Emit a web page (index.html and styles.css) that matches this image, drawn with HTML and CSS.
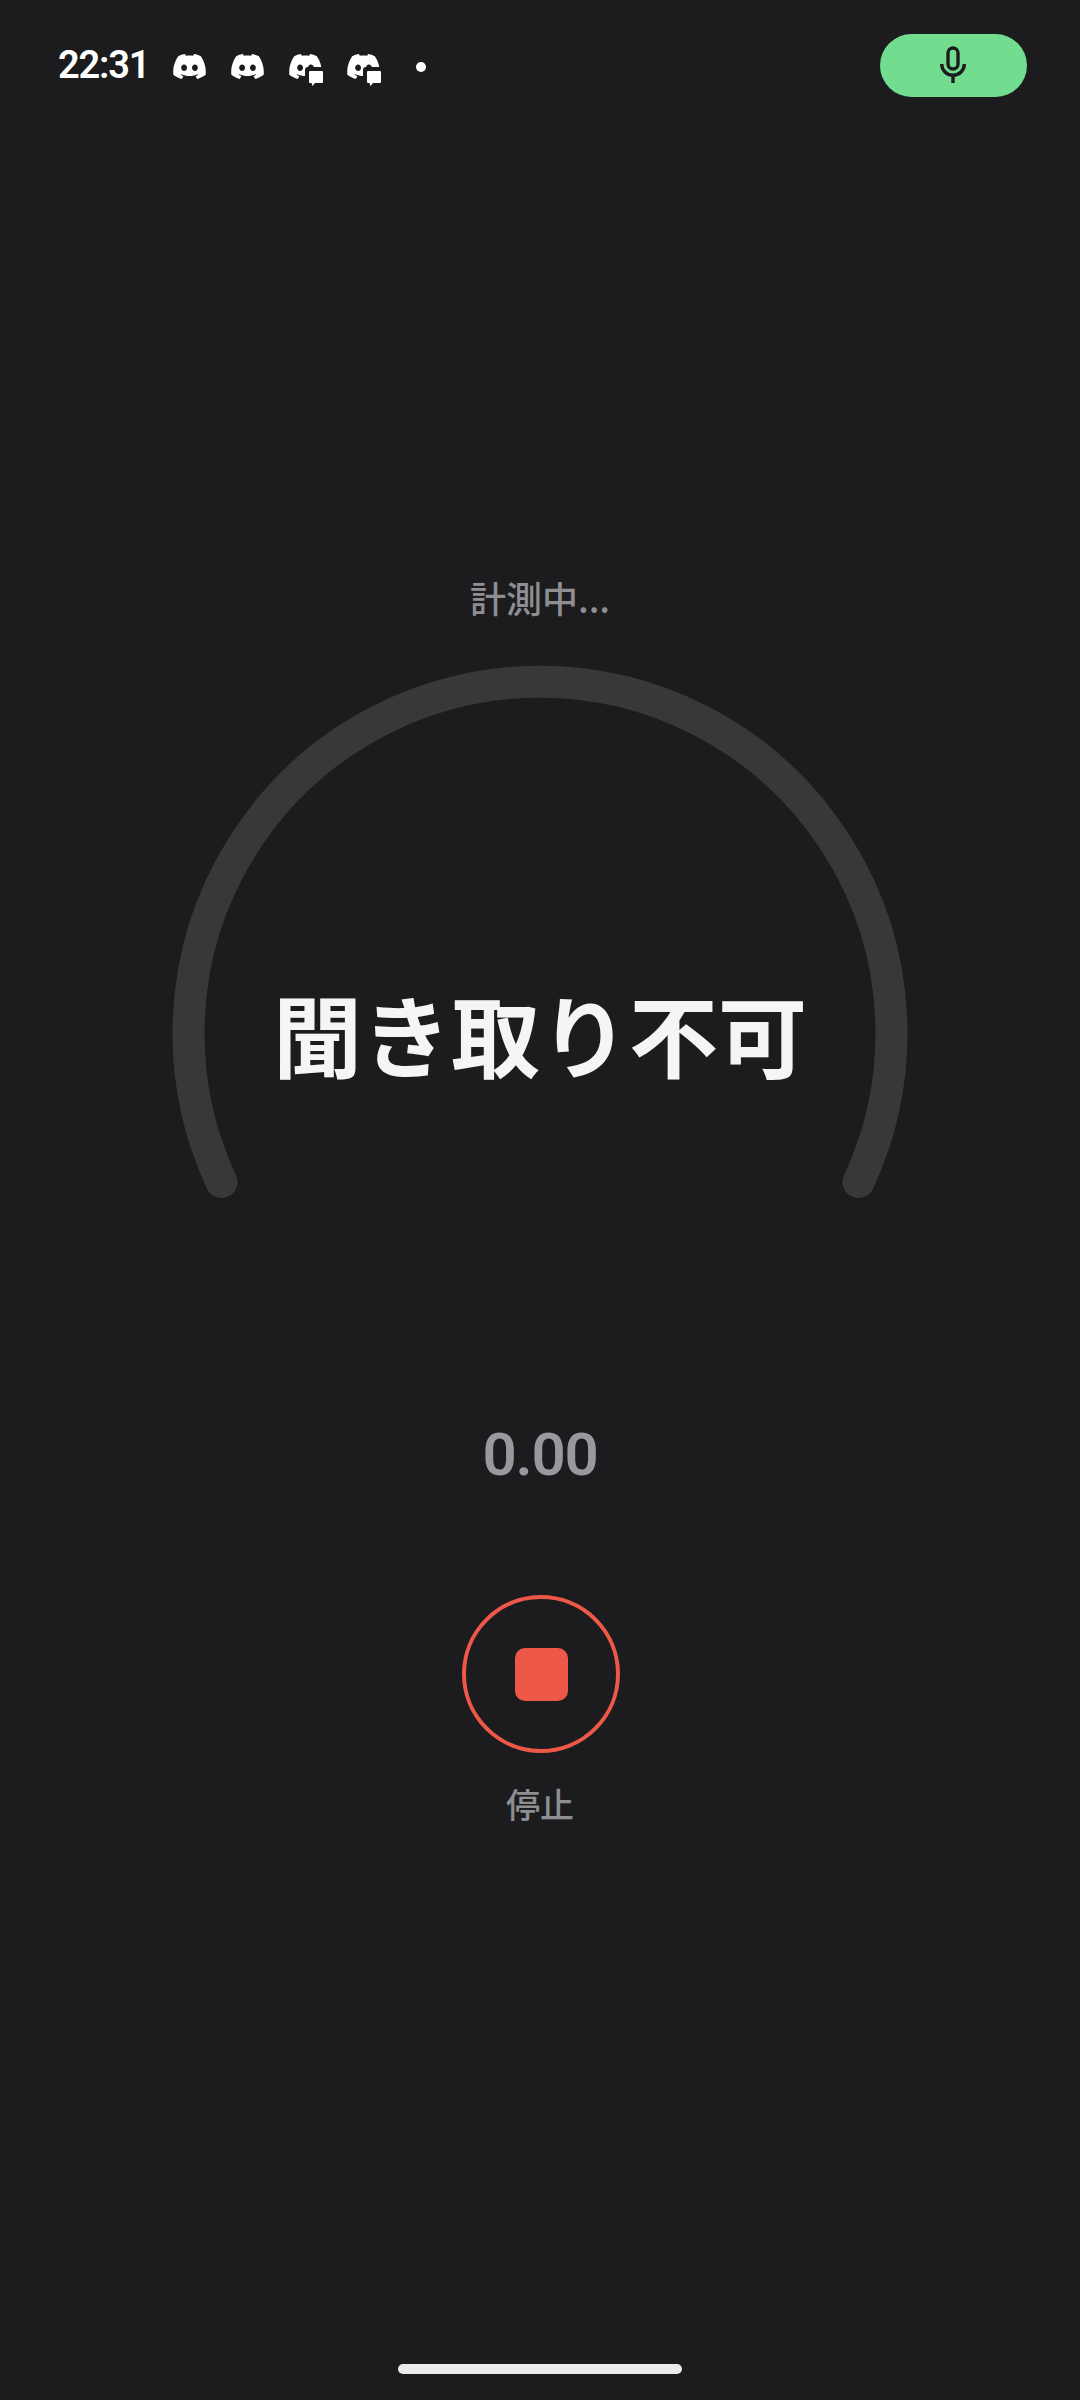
FILE: index.html
```html
<!DOCTYPE html>
<html lang="ja">
  <head>
    <meta charset="UTF-8" />
    <title>計測中</title>
    <link rel="stylesheet" href="styles.css">
  </head>
  <body>
    <svg class="defs" width="0" height="0">
      <symbol id="discord" viewBox="0 2.8 24 18.4">
        <path d="M20.317 4.3698a19.7913 19.7913 0 00-4.8851-1.5152.0741.0741 0 00-.0785.0371c-.211.3753-.4447.8648-.6083 1.2495-1.8447-.2762-3.68-.2762-5.4868 0-.1636-.3933-.4058-.8742-.6177-1.2495a.077.077 0 00-.0785-.037 19.7363 19.7363 0 00-4.8852 1.515.0699.0699 0 00-.0321.0277C.5334 9.0458-.319 13.5799.0992 18.0578a.0824.0824 0 00.0312.0561c2.0528 1.5076 4.0413 2.4228 5.9929 3.0294a.0777.0777 0 00.0842-.0276c.4616-.6304.8731-1.2952 1.226-1.9942a.076.076 0 00-.0416-.1057c-.6528-.2476-1.2743-.5495-1.8722-.8923a.077.077 0 01-.0076-.1277c.1258-.0943.2517-.1923.3718-.2914a.0743.0743 0 01.0776-.0105c3.9278 1.7933 8.18 1.7933 12.0614 0a.0739.0739 0 01.0785.0095c.1202.099.246.1981.3728.2924a.077.077 0 01-.0066.1276 12.2986 12.2986 0 01-1.873.8914.0766.0766 0 00-.0407.1067c.3604.698.7719 1.3628 1.225 1.9932a.076.076 0 00.0842.0286c1.961-.6067 3.9495-1.5219 6.0023-3.0294a.077.077 0 00.0313-.0552c.5004-5.177-.8382-9.6739-3.5485-13.6604a.061.061 0 00-.0312-.0286zM8.02 15.3312c-1.1825 0-2.1569-1.0857-2.1569-2.419 0-1.3332.9555-2.4189 2.157-2.4189 1.2108 0 2.1757 1.0952 2.1568 2.419 0 1.3332-.9555 2.4189-2.1569 2.4189zm7.9748 0c-1.1825 0-2.1569-1.0857-2.1569-2.419 0-1.3332.9554-2.4189 2.1569-2.4189 1.2108 0 2.1757 1.0952 2.1568 2.419 0 1.3332-.946 2.4189-2.1568 2.4189Z" fill="#fff"/>
      </symbol>
      <symbol id="discord-msg" viewBox="0 0 38 33">
        <use href="#discord" x="0" y="0" width="33" height="25"/>
        <rect x="16" y="13" width="22" height="20" rx="3" fill="#1c1c1e"/>
        <path d="M21 17h12a1 1 0 0 1 1 1v10a1 1 0 0 1-1 1h-7l-2.5 3-1-3H21a1 1 0 0 1-1-1V18a1 1 0 0 1 1-1z" fill="#fff"/>
      </symbol>
    </svg>

    <div class="page">
      <div class="status-bar">
        <span class="time">22:31</span>
        <div class="notifs">
          <svg class="icon-discord"><use href="#discord"/></svg>
          <svg class="icon-discord"><use href="#discord"/></svg>
          <svg class="icon-discord-msg"><use href="#discord-msg"/></svg>
          <svg class="icon-discord-msg"><use href="#discord-msg"/></svg>
          <span class="dot"></span>
        </div>
        <div class="mic-pill">
          <svg class="mic" viewBox="0 0 30 40">
            <rect x="10" y="2" width="10" height="21" rx="5" fill="none" stroke="#1c1c1e" stroke-width="3.4"/>
            <path d="M3.7 18a11.3 11.3 0 0 0 22.6 0M15 29v8" fill="none" stroke="#1c1c1e" stroke-width="3.4"/>
          </svg>
        </div>
      </div>

      <div class="main">
        <p class="measuring">計測中...</p>
        <div class="gauge">
          <svg class="gauge-arc" viewBox="0 0 768 540">
            <path d="M65.5 522A351.5 351.5 0 1 1 702.5 522" fill="none" stroke="#38383a" stroke-width="32" stroke-linecap="round"/>
          </svg>
          <h1 class="result">聞き取り不可</h1>
        </div>
        <p class="value">0.00</p>
        <button class="stop-btn"><span class="stop-square"></span></button>
        <p class="stop-label">停止</p>
      </div>

      <div class="home-bar"></div>
    </div>
  </body>
</html>
```

FILE: styles.css
```css
*{
    margin: 0;
    padding: 0;
    box-sizing: border-box;
}
body{
    background: #1c1c1e;
    font-family: "Noto Sans CJK JP", "Noto Sans", sans-serif;
}
.defs{
    display: block;
    height: 0;
}
.page{
    display: flex;
    flex-direction: column;
    min-height: 2400px;
    padding-bottom: 26px;
}
.status-bar{
    display: flex;
    align-items: center;
    padding: 34px 53px 0 58px;
}
.time{
    width: 89px;
    font-family: Roboto, sans-serif;
    font-size: 38px;
    font-weight: 600;
    letter-spacing: -1.2px;
    line-height: 63px;
    color: #fff;
}
.notifs{
    display: flex;
    align-items: flex-start;
    gap: 25px;
    margin-left: 26px;
    padding-top: 10px;
}
.icon-discord{
    width: 33px;
    height: 25px;
}
.icon-discord-msg{
    width: 38px;
    height: 33px;
    margin-right: -5px;
}
.dot{
    width: 10px;
    height: 10px;
    margin: 8px 0 0 11px;
    border-radius: 50%;
    background: #fff;
}
.mic-pill{
    display: flex;
    align-items: center;
    justify-content: center;
    width: 147px;
    height: 63px;
    margin-left: auto;
    border-radius: 32px;
    background: #72dc8f;
}
.mic{
    width: 30px;
    height: 40px;
    margin-right: 1px;
}
.main{
    display: flex;
    flex-direction: column;
    align-items: center;
    margin-top: 478px;
}
.measuring{
    font-size: 36px;
    font-weight: 500;
    line-height: 44px;
    color: #8e8e93;
}
.gauge{
    display: grid;
    justify-items: center;
    width: 768px;
    margin-top: 41px;
}
.gauge-arc{
    grid-area: 1 / 1;
    width: 768px;
    height: 540px;
}
.result{
    grid-area: 1 / 1;
    margin-top: 323px;
    font-size: 89px;
    font-weight: 700;
    line-height: 100px;
    color: #f5f5f7;
}
.value{
    margin-top: 220px;
    font-family: Roboto, sans-serif;
    font-size: 60px;
    font-weight: 600;
    letter-spacing: -1.2px;
    line-height: 70px;
    color: #98989d;
}
.stop-btn{
    display: flex;
    align-items: center;
    justify-content: center;
    width: 158px;
    height: 158px;
    margin: 105px 0 0 2px;
    border: 4px solid #ee5848;
    border-radius: 50%;
    background: none;
}
.stop-square{
    width: 53px;
    height: 53px;
    border-radius: 10px;
    background: #ee5848;
}
.stop-label{
    margin-top: 29px;
    font-size: 34px;
    font-weight: 500;
    line-height: 44px;
    color: #8e8e93;
}
.home-bar{
    width: 284px;
    height: 10px;
    margin: auto auto 0;
    border-radius: 5px;
    background: #ececec;
}
```
